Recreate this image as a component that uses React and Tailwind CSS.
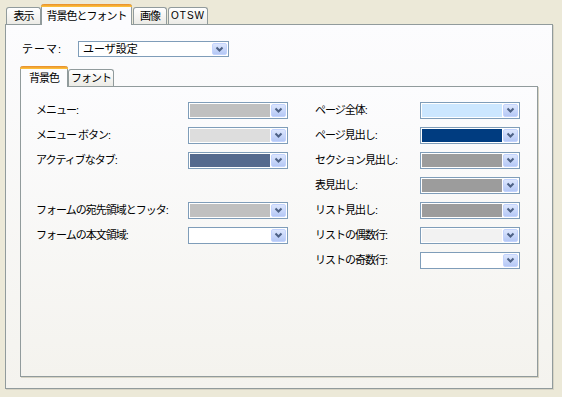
import React from 'react';

const FONT = { fontFamily: '"Liberation Sans", "Noto Sans CJK JP", sans-serif' };

// XP style combo arrow button
const ArrowBtn = () => (
  <div className="w-[15px] h-full rounded-[2px] border border-[#C3D3FD] bg-gradient-to-b from-[#DCE6FD] to-[#B5C8F5] flex items-center justify-center">
    <svg width="9" height="7" viewBox="0 0 9 7">
      <polyline points="1.5,1.5 4.5,4.5 7.5,1.5" fill="none" stroke="#4D6185" strokeWidth="2" />
    </svg>
  </div>
);

const ColorSelect = ({ color }) => (
  <div className="w-[100px] h-[17px] border border-[#7F9DB9] bg-white flex p-[1px] gap-[1px]">
    <div className="flex-1" style={{ backgroundColor: color }} />
    <ArrowBtn />
  </div>
);

const Row = ({ label, color, labelW }) => (
  <div className="flex items-center h-[17px]">
    <div className={labelW}>{label}</div>
    <ColorSelect color={color} />
  </div>
);

const Tab = ({ label, selected, w }) =>
  selected ? (
    <div className={`${w} h-[21px] -mb-px relative z-10 bg-[#FCFCFE] border-x border-[#919B9C] rounded-t-[3px] flex flex-col`}>
      <div className="h-[3px] -mx-px rounded-t-[3px] bg-gradient-to-b from-[#E68B2C] to-[#FFC73C]" />
      <div className="flex-1 flex items-center justify-center">{label}</div>
    </div>
  ) : (
    <div className={`${w} h-[17px] bg-gradient-to-b from-white to-[#ECEBE6] border border-b-0 border-[#919B9C] rounded-t-[3px] flex items-center justify-center`}>
      {label}
    </div>
  );

const leftRows = [
  ['メニュー:', '#C0C0C0'],
  ['メニュー ボタン:', '#DDDDDD'],
  ['アクティブなタブ:', '#556A8E'],
  null,
  ['フォームの宛先領域とフッタ:', '#C0C0C0'],
  ['フォームの本文領域:', '#FFFFFF'],
];

const rightRows = [
  ['ページ全体:', '#CCE7FF'],
  ['ページ見出し:', '#003C80'],
  ['セクション見出し:', '#9C9C9C'],
  ['表見出し:', '#9C9C9C'],
  ['リスト見出し:', '#9C9C9C'],
  ['リストの偶数行:', '#F2F2F2'],
  ['リストの奇数行:', '#FFFFFF'],
];

export default function App() {
  return (
    <div className="w-[562px] h-[397px] bg-[#ECE9D8] pl-[5px] pt-[4px] text-[11px] tracking-[-1px] text-black leading-none" style={FONT}>
      {/* outer tabs */}
      <div className="flex items-end h-[20px] pl-[1px]">
        <Tab label="表示" w="w-[35px]" />
        <Tab label="背景色とフォント" w="w-[91px]" selected />
        <div className="w-[1px]" />
        <Tab label="画像" w="w-[34px]" />
        <div className="w-[1px]" />
        <Tab label={<span className="tracking-[1px] text-[10px]">OTSW</span>} w="w-[40px]" />
      </div>

      {/* outer panel */}
      <div className="w-[548px] h-[365px] border border-[#919B9C] bg-gradient-to-b from-[#FCFCFE] to-[#F4F3EE] shadow-[1px_1px_0_#D6D3C4] flex flex-col px-[14px]">
        <div className="flex items-center mt-[16px] h-[16px]">
          <div className="w-[58px] pl-[2px] tracking-[1px]">テーマ:</div>
          <div className="w-[151px] h-[16px] border border-[#7F9DB9] bg-white flex p-[1px]">
            <div className="flex-1 pl-[3px] flex items-center tracking-[0px]">ユーザ設定</div>
            <ArrowBtn />
          </div>
        </div>

        {/* inner tabs */}
        <div className="flex items-end h-[20px] mt-[9px]">
          <Tab label="背景色" w="w-[48px]" selected />
          <Tab label="フォント" w="w-[46px]" />
        </div>

        {/* inner panel */}
        <div className="flex-1 mb-[11px] border border-[#919B9C] bg-gradient-to-b from-[#FCFCFE] to-[#F4F3EE] shadow-[1px_1px_0_#D6D3C4] flex gap-[27px] pl-[15px] pt-[15px]">
          <div className="flex flex-col gap-[8px]">
            {leftRows.map((r, i) =>
              r ? <Row key={i} label={r[0]} color={r[1]} labelW="w-[152px]" /> : <div key={i} className="h-[17px]" />
            )}
          </div>
          <div className="flex flex-col gap-[8px]">
            {rightRows.map((r, i) => (
              <Row key={i} label={r[0]} color={r[1]} labelW="w-[105px]" />
            ))}
          </div>
        </div>
      </div>
    </div>
  );
}
